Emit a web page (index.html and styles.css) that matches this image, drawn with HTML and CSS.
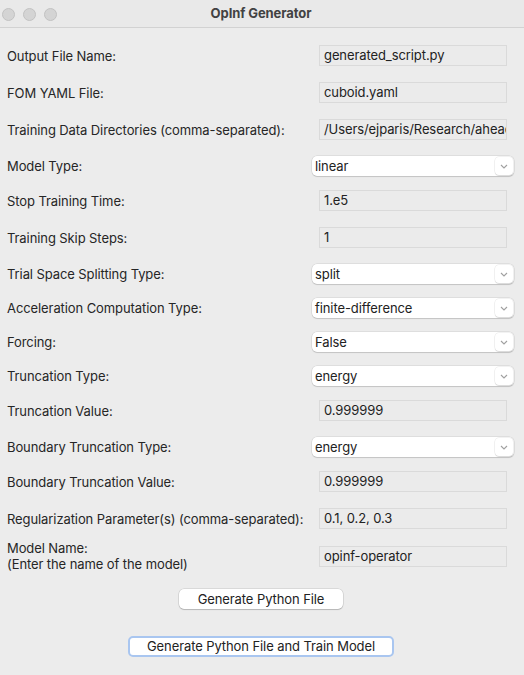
FILE: index.html
```html
<!DOCTYPE html>
<html>
<head>
<meta charset="utf-8">
<link rel="stylesheet" href="styles.css">
</head>
<body>
<div class="window">
  <div class="titlebar">
    <div class="lights"><span class="light"></span><span class="light"></span><span class="light"></span></div>
    <div class="title">OpInf Generator</div>
  </div>
  <div class="form">
    <div class="row e"><div class="label">Output File Name:</div><div class="entry">generated_script.py</div></div>
    <div class="row e"><div class="label">FOM YAML File:</div><div class="entry">cuboid.yaml</div></div>
    <div class="row e"><div class="label">Training Data Directories (comma-separated):</div><div class="entry">/Users/ejparis/Research/ahead_of_time/data</div></div>
    <div class="row c"><div class="label">Model Type:</div><div class="combo"><span class="val">linear</span><span class="chev"><svg width="8" height="5" viewBox="0 0 8 5"><path d="M1 1 L4 4 L7 1" fill="none" stroke="#a0a0a0" stroke-width="1.1"/></svg></span></div></div>
    <div class="row e"><div class="label">Stop Training Time:</div><div class="entry">1.e5</div></div>
    <div class="row e"><div class="label">Training Skip Steps:</div><div class="entry">1</div></div>
    <div class="row c"><div class="label">Trial Space Splitting Type:</div><div class="combo"><span class="val">split</span><span class="chev"><svg width="8" height="5" viewBox="0 0 8 5"><path d="M1 1 L4 4 L7 1" fill="none" stroke="#a0a0a0" stroke-width="1.1"/></svg></span></div></div>
    <div class="row c"><div class="label">Acceleration Computation Type:</div><div class="combo"><span class="val">finite-difference</span><span class="chev"><svg width="8" height="5" viewBox="0 0 8 5"><path d="M1 1 L4 4 L7 1" fill="none" stroke="#a0a0a0" stroke-width="1.1"/></svg></span></div></div>
    <div class="row c"><div class="label">Forcing:</div><div class="combo"><span class="val">False</span><span class="chev"><svg width="8" height="5" viewBox="0 0 8 5"><path d="M1 1 L4 4 L7 1" fill="none" stroke="#a0a0a0" stroke-width="1.1"/></svg></span></div></div>
    <div class="row c"><div class="label">Truncation Type:</div><div class="combo"><span class="val">energy</span><span class="chev"><svg width="8" height="5" viewBox="0 0 8 5"><path d="M1 1 L4 4 L7 1" fill="none" stroke="#a0a0a0" stroke-width="1.1"/></svg></span></div></div>
    <div class="row e"><div class="label">Truncation Value:</div><div class="entry">0.999999</div></div>
    <div class="row c"><div class="label">Boundary Truncation Type:</div><div class="combo"><span class="val">energy</span><span class="chev"><svg width="8" height="5" viewBox="0 0 8 5"><path d="M1 1 L4 4 L7 1" fill="none" stroke="#a0a0a0" stroke-width="1.1"/></svg></span></div></div>
    <div class="row e"><div class="label">Boundary Truncation Value:</div><div class="entry">0.999999</div></div>
    <div class="row e"><div class="label">Regularization Parameter(s) (comma-separated):</div><div class="entry">0.1, 0.2, 0.3</div></div>
    <div class="row m"><div class="label">Model Name:<br>(Enter the name of the model)</div><div class="entry">opinf-operator</div></div>
  </div>
  <div class="buttons">
    <div class="btn btn1">Generate Python File</div>
    <div class="btn btn2">Generate Python File and Train Model</div>
  </div>
</div>
</body>
</html>
```

FILE: styles.css
```css
html, body {
  margin: 0;
  padding: 0;
  background: #ececec;
}
body {
  font-family: Inter, "Noto Sans", "Liberation Sans", sans-serif;
  font-size: 13px;
  letter-spacing: -0.09px;
  color: #262626;
}
.window {
  width: 524px;
  height: 675px;
  background: #ececec;
  overflow: hidden;
}
.titlebar {
  height: 27px;
  border-bottom: 1px solid #d2d2d2;
  background: #e9e9e9;
  display: flex;
  align-items: center;
  position: relative;
}
.lights {
  display: flex;
  gap: 8px;
  padding-left: 2px;
  padding-top: 1px;
}
.light {
  width: 11px;
  height: 11px;
  border-radius: 50%;
  background: #d4d4d4;
  border: 0.5px solid #c2c2c2;
}
.title {
  position: absolute;
  left: 0;
  right: 0;
  top: 0;
  height: 27px;
  line-height: 27px;
  text-align: center;
  font-weight: 700;
  color: #424242;
  font-size: 13px;
  padding-right: 2px;
}
.form {
  padding-top: 9px;
  display: flex;
  flex-direction: column;
}
.row {
  display: grid;
  grid-template-columns: 305px 202px;
  align-items: center;
  padding-left: 7px;
}
.row.e { padding-top: 8px; padding-bottom: 8px; }
.row.c { padding-top: 8px; padding-bottom: 6px; }
.row.m { padding-top: 3px; padding-bottom: 3px; }
.label {
  white-space: nowrap;
  line-height: 16px;
  color: #262626;
}
.entry {
  margin-left: 7px;
  width: 188px;
  height: 21px;
  box-sizing: border-box;
  border: 1px solid #dadada;
  background: #ebebeb;
  padding-left: 4px;
  line-height: 19px;
  white-space: nowrap;
  overflow: hidden;
  color: #222;
}
.combo {
  width: 202px;
  height: 20px;
  box-sizing: border-box;
  background: #ffffff;
  border-radius: 5px;
  box-shadow: 0 0 0 0.5px rgba(0,0,0,0.12), 0 1px 1px rgba(0,0,0,0.12);
  display: flex;
  align-items: center;
  justify-content: space-between;
  padding-left: 3px;
  padding-right: 1px;
}
.val {
  color: #222;
  line-height: 20px;
}
.chev {
  width: 18px;
  height: 18px;
  box-sizing: border-box;
  border-radius: 4px;
  background: #fff;
  box-shadow: 0 0 0 0.5px rgba(0,0,0,0.10), 0 1px 1px rgba(0,0,0,0.10);
  display: flex;
  align-items: center;
  justify-content: center;
}
.buttons {
  display: flex;
  flex-direction: column;
  align-items: center;
  padding-top: 14px;
  padding-right: 2px;
}
.btn {
  height: 20px;
  box-sizing: border-box;
  background: #fff;
  border-radius: 5px;
  box-shadow: 0 0 0 0.5px rgba(0,0,0,0.16), 0 1px 1px rgba(0,0,0,0.16);
  text-align: center;
  line-height: 20px;
  color: #222;
}
.btn1 {
  width: 164px;
}
.btn2 {
  width: 266px;
  height: 21px;
  margin-top: 27px;
  border: 2px solid #a9c6f0;
  line-height: 17px;
  box-shadow: none;
}
```
